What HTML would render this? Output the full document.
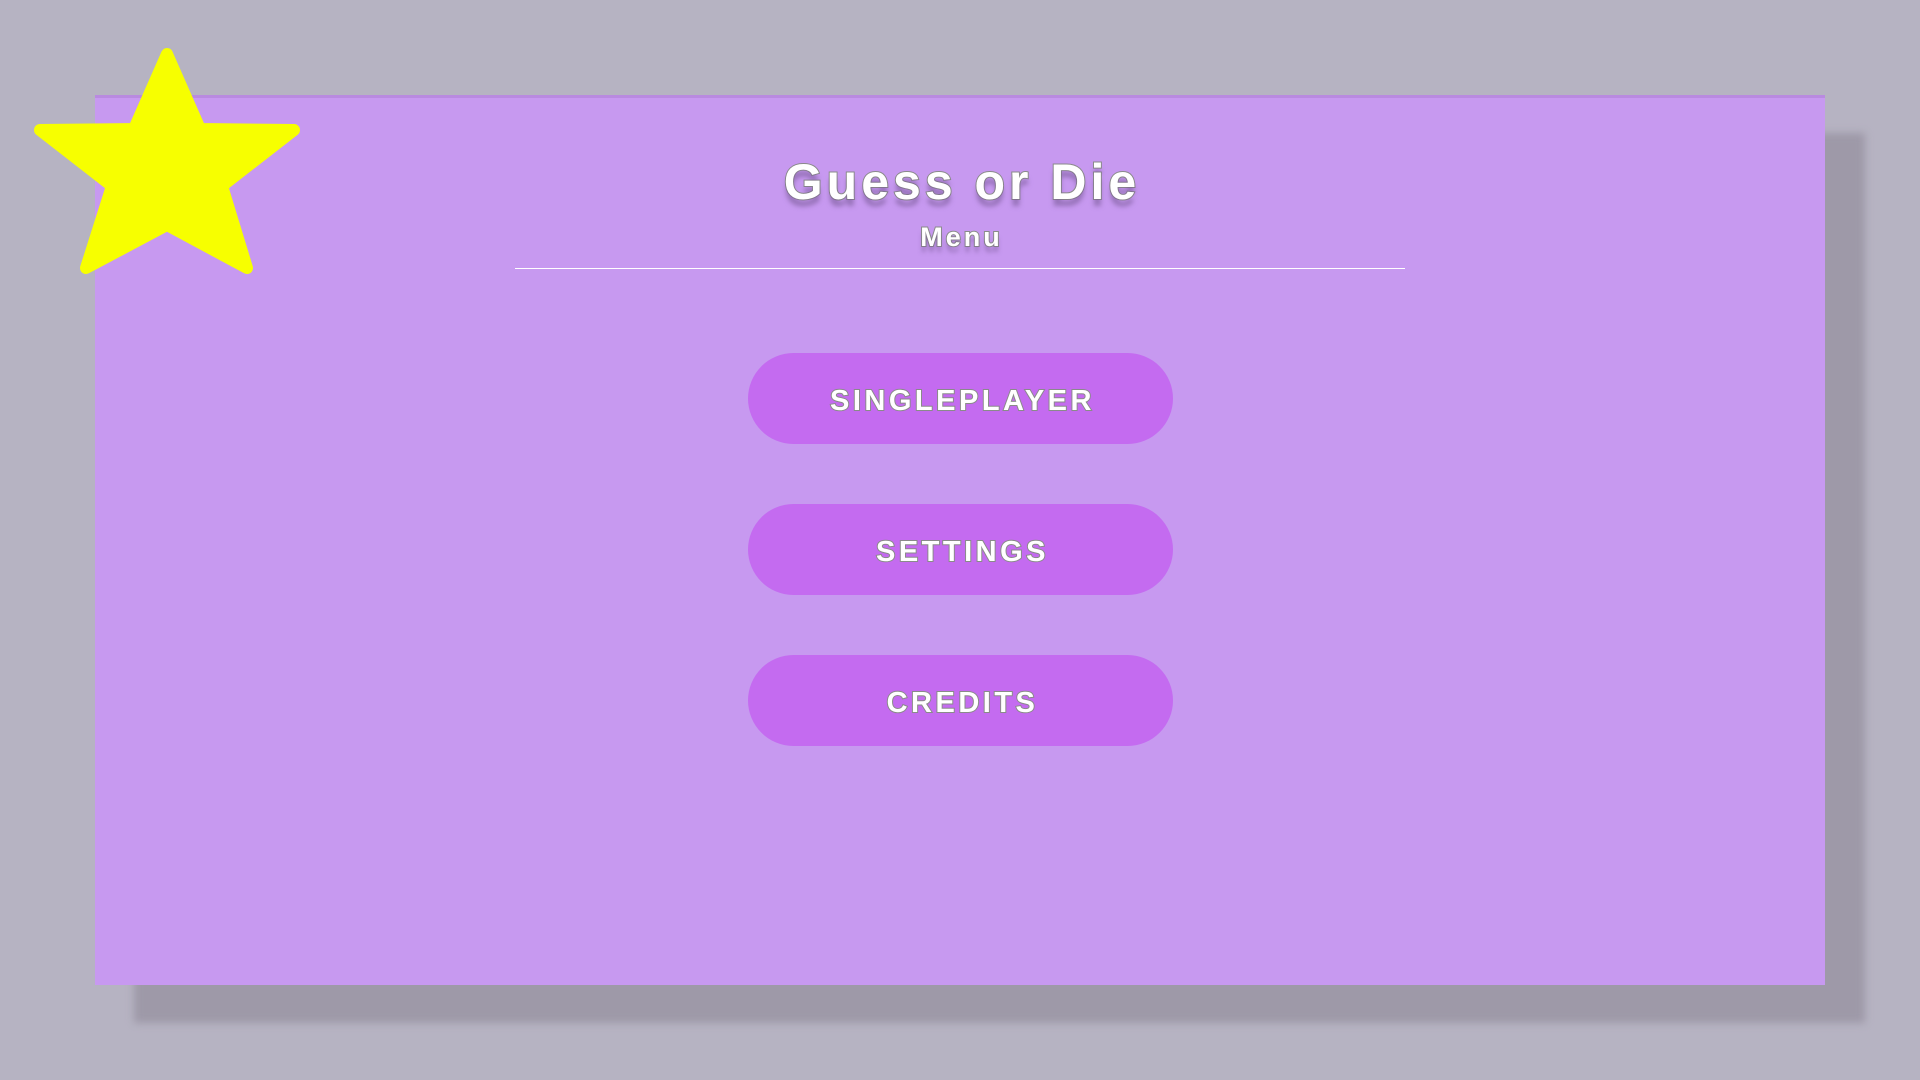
<!DOCTYPE html>
<html><head><meta charset="utf-8"><style>
html,body{margin:0;padding:0;width:1920px;height:1080px;overflow:hidden;background:#b6b3c2;font-family:"Liberation Sans",Arial,sans-serif;}
.shadow{position:absolute;left:134px;top:133px;width:1731px;height:890px;background:#9e99a8;filter:blur(4px);}
.panel{position:absolute;left:95px;top:95px;width:1730px;height:890px;background:#c799f0;border-top:3px solid #b98ae0;box-sizing:border-box;}
.t{position:absolute;left:0;width:1920px;text-align:center;color:#fff;font-weight:bold;-webkit-text-stroke:2px #8a8a8a;paint-order:stroke fill;}
.title{top:153px;font-size:50px;letter-spacing:4px;padding-left:4px;box-sizing:border-box;text-shadow:0 7px 5px rgba(120,90,150,0.6);}
.menu{top:222px;font-size:27px;letter-spacing:3px;padding-left:3px;box-sizing:border-box;text-shadow:0 6px 4px rgba(120,90,150,0.5);}
.line{position:absolute;left:515px;width:890px;top:268px;height:1px;background:#fff;}
.btn{position:absolute;left:748px;width:425px;height:91px;border-radius:46px;background:#c46bf0;color:#fff;font-weight:bold;font-size:29px;letter-spacing:3.5px;text-align:center;line-height:96px;-webkit-text-stroke:2px #8a8a8a;paint-order:stroke fill;padding-left:4px;box-sizing:border-box;}
svg{position:absolute;left:0;top:0;}
</style></head><body>
<div class="shadow"></div>
<div class="panel"></div>
<div class="t title">Guess or Die</div>
<div class="t menu">Menu</div>
<div class="line"></div>
<div class="btn" style="top:353px">SINGLEPLAYER</div>
<div class="btn" style="top:504px">SETTINGS</div>
<div class="btn" style="top:655px">CREDITS</div>
<svg width="320" height="300"><polygon points="167,54 134,129 40,130 112,186 86,268 167,225 247,268 222,186 294,130 200,129" fill="#f7ff00" stroke="#f7ff00" stroke-width="12" stroke-linejoin="round"/></svg>
</body></html>
